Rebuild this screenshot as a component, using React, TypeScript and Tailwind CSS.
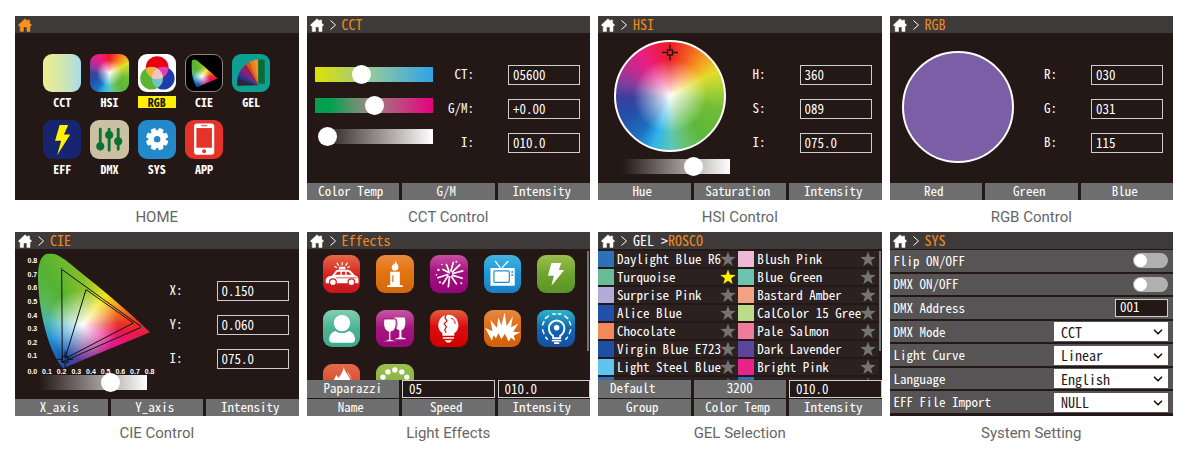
import React from 'react';
import { ChevronDown } from 'lucide-react';

/* ---------- shared pieces ---------- */

function HomeIcon({ className }: { className: string }) {
  return (
    <svg viewBox="0 0 14 14" className={`h-3.5 w-3.5 shrink-0 ${className}`} aria-hidden="true">
      <path
        d="M7 .8 L9.6 3.2 V2 H11.6 V5.1 L13.6 7.1 L12.9 7.9 H12 V13.4 H8.9 V8.9 H5.5 V13.4 H2.2 V7.9 H1.1 L.4 7.1 Z"
        fill="currentColor"
        stroke="currentColor"
        strokeWidth=".5"
        strokeLinejoin="round"
      />
    </svg>
  );
}

function Screen({
  caption,
  trail,
  children,
}: {
  caption: string;
  trail?: React.ReactNode;
  children: React.ReactNode;
}) {
  return (
    <figure className="flex min-w-0 flex-col">
      <div className="flex aspect-[567/368] min-h-0 flex-col bg-[#231815] font-['Noto_Sans_Mono_CJK_SC','Noto_Sans_CJK_SC',monospace] text-[13px] leading-4 text-white [font-feature-settings:'hwid']">
        <header className="flex h-[17px] shrink-0 items-center bg-[#3e3a39] pl-[3px] text-[14px]">
          <a href="#home" aria-label="Home" className="flex">
            <HomeIcon className={trail ? 'text-white' : 'text-[#f7931e]'} />
          </a>
          {trail && (
            <>
              <svg viewBox="0 0 6 10" className="ml-1.5 h-2.5 w-1.5" aria-hidden="true">
                <path d="M.5 .5 L5.5 5 L.5 9.5" fill="none" stroke="#fff" strokeWidth="1" />
              </svg>
              <span className="ml-1.5 pb-0.5 whitespace-pre text-[#ee8a1d]">{trail}</span>
            </>
          )}
        </header>
        {children}
      </div>
      <figcaption className="flex h-8 items-center justify-center pt-0.5 font-[Roboto,sans-serif] text-[15px] text-[#666]">
        {caption}
      </figcaption>
    </figure>
  );
}

function Tabs({ items }: { items: string[] }) {
  return (
    <nav className="grid shrink-0 grid-cols-3 gap-[3px]">
      {items.map((t) => (
        <button key={t} type="button" className="flex h-[17px] items-center justify-center bg-[#6f6e6e] pr-1 pb-0.5">
          {t}
        </button>
      ))}
    </nav>
  );
}

function Fields({ id, rows }: { id: string; rows: [string, string][] }) {
  return (
    <div className="ml-auto flex flex-col gap-3.5 pt-8 pr-2.5">
      {rows.map(([label, value]) => (
        <div key={label} className="flex items-center justify-end gap-[34px]">
          <label htmlFor={`${id}-${label}`} className="pb-0.5">
            {label}:
          </label>
          <input
            id={`${id}-${label}`}
            defaultValue={value}
            className="h-5 w-[72px] border border-[#d0cecd] bg-transparent pb-0.5 pl-1"
          />
        </div>
      ))}
    </div>
  );
}

function Slider({ label, value, className }: { label: string; value: number; className: string }) {
  return (
    <input
      type="range"
      aria-label={label}
      defaultValue={value}
      step="any"
      className={`block h-[19px] appearance-none bg-[length:100%_15px] bg-center bg-no-repeat [&::-webkit-slider-thumb]:h-[19px] [&::-webkit-slider-thumb]:w-[19px] [&::-webkit-slider-thumb]:appearance-none [&::-webkit-slider-thumb]:rounded-full [&::-webkit-slider-thumb]:bg-white ${className}`}
    />
  );
}

const dimmer = 'bg-[linear-gradient(to_right,#231815_4%,#fff)]';

/* ---------- colour drawings ---------- */

const GAMUT = 'M12 0 C4 0 0 8 0 24 C0 50 8 95 25 115 L112 79 C85 53 60 33 40 17 C28 7 20 0 12 0Z';

function Gamut({ id }: { id: string }) {
  return (
    <g>
      <clipPath id={id}>
        <path d={GAMUT} />
      </clipPath>
      <g clipPath={`url(#${id})`}>
        <foreignObject width="112" height="115">
          <div className="h-full w-full bg-[radial-gradient(circle_at_40%_62%,#fff_0%,rgba(255,255,255,.75)_8%,rgba(255,255,255,0)_36%),conic-gradient(from_0deg_at_40%_62%,#86bf2a_0deg,#b5cf20_18deg,#f5e61a_38deg,#f39a1f_62deg,#ea3323_88deg,#e8174a_100deg,#e5178c_120deg,#b02a8c_150deg,#6a3796_180deg,#1d50a8_207deg,#1c8fd8_245deg,#45b6b0_275deg,#5bb85a_300deg,#55b230_325deg,#86bf2a_360deg)]" />
        </foreignObject>
      </g>
    </g>
  );
}

function CieChart() {
  const ys = ['0.8', '0.7', '0.6', '0.5', '0.4', '0.3', '0.2', '0.1'];
  const xs = ['0.0', '0.1', '0.2', '0.3', '0.4', '0.5', '0.6', '0.7', '0.8'];
  return (
    <svg viewBox="0 0 132 124" className="h-[124px] w-[132px] overflow-visible" role="img" aria-label="CIE diagram">
      <g transform="translate(11 4.3)">
        <Gamut id="gamut-chart" />
        <g fill="none" stroke="#111" strokeWidth="1">
          <path d="M23.7 16 L103.7 73.7 L24.3 108.7 Z" />
          <path d="M48 36.3 L95.3 69.7 L27 105.3 Z" />
          <path d="M24 103 h6 v6 h-6 z M19 106 h5 M30 106 h5 M27 98 v5 M27 109 v5" />
        </g>
        <circle cx="23.7" cy="15.6" r="1.2" fill="#2a6a9a" />
        <circle cx="103.7" cy="73.7" r="1.2" fill="#2a6a9a" />
      </g>
      <g fill="#fff" className="font-['Liberation_Sans',sans-serif] text-[7px] font-bold">
        {ys.map((t, i) => (
          <text key={t} x="0.5" y={14.2 + i * 13.6}>
            {t}
          </text>
        ))}
        {xs.map((t, i) => (
          <text key={t} x={5.3 + i * 14.67} y="125.2" textAnchor="middle">
            {t}
          </text>
        ))}
      </g>
    </svg>
  );
}

const hueFill =
  'bg-[radial-gradient(circle,#fff_0%,rgba(255,255,255,.7)_12%,rgba(255,255,255,0)_48%),conic-gradient(#ed1c24_0deg,#f15a24_22deg,#f7931e_40deg,#e3dd2c_62deg,#b0d236_80deg,#6fbd36_105deg,#5cb83a_140deg,#66c06a_160deg,#5fc6b6_178deg,#2fb4ea_198deg,#1c6fc0_218deg,#2350a8_245deg,#3a3f9e_268deg,#7d3f9b_285deg,#c22a8f_305deg,#e81f86_325deg,#ec1c50_345deg,#ed1c24_360deg)]';

/* ---------- home icons ---------- */

function wedge(a: number, b: number, r: number) {
  const p = (d: number) => {
    const t = (d * Math.PI) / 180;
    return `${(26.5 - r * Math.cos(t)).toFixed(2)} ${(31 - r * Math.sin(t)).toFixed(2)}`;
  };
  return `M26.5 31 L${p(a)} L${p(b)} Z`;
}

const fan = ['#3d1f1c', '#25235c', '#2b2f86', '#5b2a86', '#86217f', '#9c1c4c', '#d9531e', '#ee7d1a', '#f6921e'];

type Tile = { name: string; box: string; art: React.ReactNode };

const homeTiles: Tile[] = [
  { name: 'CCT', box: 'bg-[linear-gradient(to_right,#efee8c,#cfe6b4_55%,#a8dcea)]', art: null },
  { name: 'HSI', box: hueFill, art: null },
  {
    name: 'RGB',
    box: 'bg-white',
    art: (
      <g className="isolate">
        <circle cx="19" cy="13.5" r="11.3" fill="#e60012" />
        <circle cx="13.5" cy="24" r="11.3" fill="#5cb531" className="mix-blend-screen" />
        <circle cx="25" cy="24" r="11.3" fill="#1f3cae" className="mix-blend-screen" />
      </g>
    ),
  },
  {
    name: 'CIE',
    box: 'bg-black border border-[#8a8482]',
    art: (
      <g transform="translate(5.5 4.5) scale(.245 .255)">
        <Gamut id="gamut-tile" />
      </g>
    ),
  },
  {
    name: 'GEL',
    box: 'bg-[#0f9e92]',
    art: (
      <g>
        {fan.map((c, i) => (
          <path key={c} d={wedge(i * 10 - 1, i * 10 + 10, 21.5 + i * 0.5)} fill={c} />
        ))}
        <rect x="26" y="5.5" width="6.5" height="24" fill="#0b6b3a" />
      </g>
    ),
  },
  {
    name: 'EFF',
    box: 'bg-[#17256f]',
    art: <path d="M16.5 5 H25 L20.8 14.3 H27 L14 35 L18 20.5 H12 Z" fill="#fff200" />,
  },
  {
    name: 'DMX',
    box: 'bg-[#cbc0a2]',
    art: (
      <g fill="#0c7137">
        <path d="M10.2 9 V29 M19 9 V30 M28 9 V29" stroke="#0c7137" strokeWidth="2.8" strokeLinecap="round" />
        <circle cx="10.2" cy="26" r="4" />
        <circle cx="19" cy="15" r="4" />
        <circle cx="28" cy="21" r="4" />
      </g>
    ),
  },
  {
    name: 'SYS',
    box: 'bg-[#2489ca]',
    art: (
      <g>
        <circle cx="19" cy="19" r="8.8" fill="#fff" />
        {[22.5, 67.5, 112.5, 157.5, 202.5, 247.5, 292.5, 337.5].map((a) => (
          <rect key={a} x="16.4" y="7.9" width="5.2" height="5" rx="1.2" fill="#fff" transform={`rotate(${a} 19 19)`} />
        ))}
        <circle cx="19" cy="19" r="3.2" fill="#2489ca" />
      </g>
    ),
  },
  {
    name: 'APP',
    box: 'bg-[#e63329]',
    art: (
      <g>
        <rect x="9" y="3.5" width="20" height="31" rx="3" fill="#fff" />
        <rect x="11.3" y="8" width="15.4" height="19.5" fill="#e63329" />
        <circle cx="19" cy="31" r="1.9" fill="#e63329" />
        <rect x="16" y="5.2" width="6" height="1" fill="#e63329" />
      </g>
    ),
  },
];

/* ---------- effect icons ---------- */

const w = { fill: '#fff' };
const line = { fill: 'none', stroke: '#fff', strokeLinecap: 'round' as const, strokeLinejoin: 'round' as const };

const effects: Tile[] = [
  {
    name: 'Cop car',
    box: 'bg-[linear-gradient(#e4694a,#d7261f_50%,#c9151b)]',
    art: (
      <g>
        <path d="M16 11.8 h6.5 v2.6 h-6.5z M3 28.5 C1.8 24 3.5 21.5 9 20.8 L13 16 C13.6 15.2 14.5 14.8 15.5 14.8 H24 C26 14.8 27.5 15.4 28.6 16.6 L32 20.5 C35.5 21.5 36.4 24 35.6 28.5 Z" {...w} />
        <path d="M12 20 L14.6 16.8 H17.6 V20 Z M19 16.8 H22.4 V20 H19 Z M23.8 16.8 H25.5 L29 20 H23.8 Z M13 22.6 H34 V23.4 H13Z" fill="#d7261f" />
        <g stroke="#d2201e" strokeWidth="1.2" {...w}>
          <circle cx="10" cy="27.5" r="3.4" />
          <circle cx="28.6" cy="27.5" r="3.4" />
        </g>
        <path d="M19.3 10 V7.6 M15.6 10.4 L14.2 8.2 M23 10.4 L24.4 8.2 M13.6 12.6 L11.8 11.6 M25 12.6 L26.8 11.6" strokeWidth="1.2" {...line} />
      </g>
    ),
  },
  {
    name: 'Candle',
    box: 'bg-[linear-gradient(#e88a3e,#e3740f_45%,#d2670c)]',
    art: (
      <g>
        <path d="M19.3 4.5 C20 8 23 9.5 22.6 12.8 C22.3 15 20.5 15.8 19 15.8 C17 15.8 15.7 14.4 15.8 12.6 C15.9 10.6 17.5 9.8 17.6 8 C18.3 8.6 18.8 9.4 18.8 10 C19.6 8.6 19.5 6.5 19.3 4.5Z M14.3 17 H24 V30.6 H27 V32.3 H11.3 V30.6 H14.3Z" {...w} />
        <path d="M17 20.5 V27.5" stroke="#dd7010" strokeWidth="1.2" />
      </g>
    ),
  },
  {
    name: 'Fireworks',
    box: 'bg-[linear-gradient(#c94fa4,#a3107f_45%,#95057b)]',
    art: (
      <g>
        <path d="M19.5 18 L13 14.5 M19 16 L16.5 9.5 M21 16 L23.5 7.5 M22.5 17 L30 10 M23 18.7 L33 16 M23 20.5 L32.5 23.5 M21.5 21.5 L26.5 29 M19.6 22 L18.5 32 M18.2 21 L13 29 M17.8 19.6 L8 23" strokeWidth="1.7" {...line} />
        <g {...w}>
          <circle cx="8.5" cy="15" r="1.2" />
          <circle cx="10" cy="27.5" r="1.1" />
          <circle cx="26.5" cy="6.8" r=".9" />
          <circle cx="31.5" cy="28.5" r="1.1" />
          <circle cx="12" cy="9.5" r=".8" />
          <circle cx="6.5" cy="20" r=".8" />
        </g>
      </g>
    ),
  },
  {
    name: 'TV screen',
    box: 'bg-[linear-gradient(#45b1e0,#1f9ad9_45%,#1b7ec4)]',
    art: (
      <g>
        <path d="M11.5 6.5 L16 12.5 M24 6.5 L18.5 12.5" strokeWidth="1.3" {...line} />
        <path d="M6.5 13 H31 V31 H6.5Z" {...w} />
        <rect x="10" y="16" width="15.5" height="11.5" rx="1" fill="none" stroke="#1f8fd0" strokeWidth="1.2" />
        <path d="M27.5 16.5 H29.5 V18 H27.5Z M27.5 19.5 H29.5 V21 H27.5Z" fill="#1f8fd0" />
      </g>
    ),
  },
  {
    name: 'Lightning',
    box: 'bg-[linear-gradient(#9dbd50,#6fa52c_50%,#5a9328)]',
    art: <path d="M14.5 8 H24.5 L22 15 H27.5 L14.5 31 L17 21 H11 Z" {...w} />,
  },
  {
    name: 'Club',
    box: 'bg-[linear-gradient(#83cdb4,#4bb494_50%,#3ca88b)]',
    art: (
      <path d="M19.2 5 A8.2 8.2 0 1 1 19.1 5Z M12.5 21.2 C16.5 24.2 22 24.2 26 21.2 C30.5 22.5 32.3 26 32.3 29.5 C32.3 32 31 33 28.5 33 H10 C7.4 33 6.2 32 6.2 29.5 C6.2 26 8.5 22.5 12.5 21.2Z" {...w} />
    ),
  },
  {
    name: 'Party',
    box: 'bg-[linear-gradient(#c656a3,#a5147f_50%,#9a0a7c)]',
    art: (
      <g>
        <path d="M18.5 7.5 H29 C30.5 15 29 19.5 25.6 20.5 V27.5 L30 28.6 V29.5 H18.5 L23.6 27.4 V20.5 C20 19.5 17.5 15 18.5 7.5Z" {...w} />
        <path d="M8 9 H20 C21.3 17 19 21 15 22 V29.8 L19.7 31 V32 H8 V31 L12.8 29.8 V22 C9 21 6.7 17 8 9Z" stroke="#a5147f" strokeWidth="1" {...w} />
        <path d="M20.5 9.5 C21.5 13 21.3 16 20.5 18" fill="none" stroke="#a5147f" strokeWidth=".8" />
      </g>
    ),
  },
  {
    name: 'Faulty bulb',
    box: 'bg-[linear-gradient(#e2603c,#dc0d0f_45%,#cf0000)]',
    art: (
      <g>
        <path d="M18.5 4.8 A10.4 10.4 0 0 1 24.5 23.5 V26 H12.5 V23.5 A10.4 10.4 0 0 1 18.5 4.8Z M12.8 27.4 H24.2 V29 H12.8Z M14.4 30.4 H22.6 L20 32.8 H17Z" {...w} />
        <path d="M16.4 4.5 L15 8 L17.2 11 L14.2 14 L16.6 17 L14.8 20 L16.2 23" fill="none" stroke="#db1511" strokeWidth="1.2" />
        <path d="M21 8.3 C24 9.2 25.5 11.4 25.4 14" fill="none" stroke="#db1511" strokeWidth="1" />
      </g>
    ),
  },
  {
    name: 'Explosion',
    box: 'bg-[linear-gradient(#e68a45,#dd6a12_50%,#d2600a)]',
    art: (
      <path d="M8 31 L1 18 L8.5 21.5 L6.5 10 L13 18 L14.5 7.5 L17.5 15.5 L20.8 2.5 L22.8 16 L29 6.5 L27.3 17.5 L34.5 13.5 L29.5 22 L36.5 22.5 L30 26 L31.5 31 L27 28 L25 32 L21 24 L17.5 29.5 L14.5 23.5 L12 28.5 L9.5 25.5 Z" {...w} />
    ),
  },
  {
    name: 'Pulsing',
    box: 'bg-[linear-gradient(#2fb4c8,#1166b0_50%,#1450a0)]',
    art: (
      <g>
        <path d="M16.2 28.5 V26 C13.4 24.2 12 21.6 12 18.4 A7.8 7.8 0 0 1 27.6 18.4 C27.6 21.6 26.2 24.2 23.4 26 V28.5 Z" strokeWidth="1.9" {...line} />
        <path d="M15.6 31 H24 M17.8 33.4 H21.8" strokeWidth="1.6" {...line} />
        <circle cx="19.8" cy="17.8" r="2.8" {...w} />
        <path d="M8.5 8.5 L11.5 6 M5.6 15 L7 11.6 M5.6 20 L7 23.8 M8.8 27.5 L10.4 29.5 M28 6 L31 8.5 M32.6 11.6 L34 15 M34 20 L32.6 23.8 M30.8 27.5 L29 29.5 M16 4 H18.5 M21.5 4 H24" strokeWidth="1.5" {...line} />
      </g>
    ),
  },
  {
    name: 'Fire',
    box: 'bg-[linear-gradient(#e4694a,#c9351b)]',
    art: <path d="M21 3 C22 9 28 12 29 22 C29 31 24 34 19 34 C13 34 8 30 10 20 C11 15 12.5 13 13.5 11 C14.5 12 15 13 15.3 14 C18 11 20 8 21 3Z M24 7 C26 9 28 12 29 16 Z" {...w} />,
  },
  {
    name: 'Color chase',
    box: 'bg-[linear-gradient(#9dc050,#6fa52c)]',
    art: (
      <g {...w}>
        <circle cx="19" cy="6" r="2.7" />
        <circle cx="12" cy="8" r="2.7" />
        <circle cx="26" cy="8" r="2.7" />
        <circle cx="7" cy="13.2" r="2.7" />
        <circle cx="31" cy="13.2" r="2.7" />
        <circle cx="6" cy="20" r="2.7" />
        <circle cx="32" cy="20" r="2.7" />
      </g>
    ),
  },
];

function TileArt({ tile }: { tile: Tile }) {
  return (
    <span className={`block aspect-square w-full overflow-hidden rounded-[9px] ${tile.box}`}>
      {tile.art && (
        <svg viewBox="0 0 38 38" className="h-full w-full" aria-hidden="true">
          {tile.art}
        </svg>
      )}
    </span>
  );
}

/* ---------- gel list ---------- */

type Gel = { name: string; chip: string; fav?: boolean };

const gels: Gel[] = [
  { name: 'Daylight Blue R6', chip: 'bg-[#2d72b8]' },
  { name: 'Blush Pink', chip: 'bg-[#efb8d6]' },
  { name: 'Turquoise', chip: 'bg-[#68bd96]', fav: true },
  { name: 'Blue Green', chip: 'bg-[#6cc4b0]' },
  { name: 'Surprise Pink', chip: 'bg-[#b4acd8]' },
  { name: 'Bastard Amber', chip: 'bg-[#f5a183]' },
  { name: 'Alice Blue', chip: 'bg-[#2350a6]' },
  { name: 'CalColor 15 Gree', chip: 'bg-[#bbdc8b]' },
  { name: 'Chocolate', chip: 'bg-[#f08a5d]' },
  { name: 'Pale Salmon', chip: 'bg-[#f07c9b]' },
  { name: 'Virgin Blue E723', chip: 'bg-[#1f4fa4]' },
  { name: 'Dark Lavender', chip: 'bg-[#5b469b]' },
  { name: 'Light Steel Blue', chip: 'bg-[#5fc4ee]' },
  { name: 'Bright Pink', chip: 'bg-[#e8248c]' },
  { name: '', chip: 'bg-[#2d72b8]' },
  { name: '', chip: 'bg-[#2d72b8]' },
];

function Star({ on }: { on?: boolean }) {
  return (
    <svg viewBox="0 0 16 16" className={`h-4 w-4 shrink-0 ${on ? 'text-[#fff200]' : 'text-[#757373]'}`} aria-hidden="true">
      <path d="M8 .4 L9.9 5.8 L15.7 6 L11.1 9.5 L12.7 15.1 L8 11.8 L3.3 15.1 L4.9 9.5 L.3 6 L6.1 5.8 Z" fill="currentColor" />
    </svg>
  );
}

/* ---------- settings ---------- */

function Row({ id, label, children }: { id: string; label: string; children: React.ReactNode }) {
  return (
    <div className="flex min-h-0 flex-1 items-center justify-between border-b-2 border-[#231815] bg-[#575455] pr-[5px] pl-1">
      <label htmlFor={id}>{label}</label>
      {children}
    </div>
  );
}

function Toggle({ id }: { id: string }) {
  return (
    <input
      id={id}
      type="checkbox"
      role="switch"
      className="flex h-[15px] w-[35px] appearance-none items-center rounded-full bg-[#b1b0b0] p-px before:block before:h-[13px] before:w-[13px] before:rounded-full before:bg-white checked:before:translate-x-5"
    />
  );
}

function Picker({ id, value }: { id: string; value: string }) {
  return (
    <span className="relative block w-[114px]">
      <select id={id} className="block h-[19px] w-full appearance-none bg-white pl-[7px] text-[14px] leading-[18px] text-[#231815]">
        <option>{value}</option>
      </select>
      <ChevronDown className="pointer-events-none absolute top-[3px] right-[3px] h-3.5 w-3.5 text-[#231815]" strokeWidth={3} />
    </span>
  );
}

const readout = 'h-[18px] w-full min-w-0 border border-[#d0cfcf] bg-transparent pb-0.5 pl-1.5';
const cell = 'flex h-[18px] items-center bg-[#6f6e6e] pb-0.5';

export default function App() {
  return (
    <main className="min-h-screen bg-white pt-4 pr-[18px] pl-[15px]">
      <div className="grid grid-cols-1 gap-x-2 sm:grid-cols-2 lg:grid-cols-4">
        <Screen caption="HOME">
          <div className="grid grid-cols-5 gap-x-[9px] gap-y-3 px-7 pt-[21px]">
            {homeTiles.map((t) => (
              <button key={t.name} type="button" className="flex flex-col items-center gap-1">
                <TileArt tile={t} />
                <span
                  className={`block w-full text-center text-[12px] leading-3 font-bold ${
                    t.name === 'RGB' ? 'bg-[#fff100] text-[#231815]' : ''
                  }`}
                >
                  {t.name}
                </span>
              </button>
            ))}
          </div>
        </Screen>

        <Screen caption="CCT Control" trail="CCT">
          <div className="flex min-h-0 flex-1">
            <div className="flex flex-col gap-3 pt-8 pl-2">
              <Slider label="Color Temp" value={38} className="w-[118px] bg-[linear-gradient(to_right,#dfe000,#8fc7a0_50%,#2fa3e6)]" />
              <Slider label="G/M" value={51.5} className="w-[118px] bg-[linear-gradient(to_right,#00a04e_12%,#9a8a80_45%,#e6007e)]" />
              <Slider label="Intensity" value={4} className={`w-[118px] ${dimmer}`} />
            </div>
            <Fields id="cct" rows={[['CT', '05600'], ['G/M', '+0.00'], ['I', '010.0']]} />
          </div>
          <Tabs items={['Color Temp', 'G/M', 'Intensity']} />
        </Screen>

        <Screen caption="HSI Control" trail="HSI">
          <div className="flex min-h-0 flex-1">
            <div className="flex flex-col items-start gap-[5px] pt-[7px] pl-4">
              <div className={`h-28 w-28 rounded-full border-2 border-white ${hueFill}`}>
                <svg viewBox="0 0 108 108" className="h-full w-full" aria-hidden="true">
                  <path d="M51.5 8 h5 v5 h-5z M46 10.5 h5.5 M56.5 10.5 h5.5 M54 2.5 v5.5 M54 13 v5.5" fill="none" stroke="#231815" strokeWidth="1.3" />
                </svg>
              </div>
              <Slider label="Intensity" value={71.5} className={`ml-1 w-28 ${dimmer}`} />
            </div>
            <Fields id="hsi" rows={[['H', '360'], ['S', '089'], ['I', '075.0']]} />
          </div>
          <Tabs items={['Hue', 'Saturation', 'Intensity']} />
        </Screen>

        <Screen caption="RGB Control" trail="RGB">
          <div className="flex min-h-0 flex-1">
            <div className="pt-[18px] pl-3">
              <div className="h-28 w-28 rounded-full border-2 border-white bg-[#7b5ea6]" />
            </div>
            <Fields id="rgb" rows={[['R', '030'], ['G', '031'], ['B', '115']]} />
          </div>
          <Tabs items={['Red', 'Green', 'Blue']} />
        </Screen>

        <Screen caption="CIE Control" trail="CIE">
          <div className="flex min-h-0 flex-1">
            <div className="pl-3">
              <CieChart />
              <Slider label="Intensity" value={71} className={`ml-2 w-28 ${dimmer}`} />
            </div>
            <Fields id="cie" rows={[['X', '0.150'], ['Y', '0.060'], ['I', '075.0']]} />
          </div>
          <Tabs items={['X_axis', 'Y_axis', 'Intensity']} />
        </Screen>

        <Screen caption="Light Effects" trail="Effects">
          <div className="flex min-h-0 flex-1 items-start overflow-hidden">
            <div className="grid flex-1 grid-cols-5 gap-x-4 gap-y-[17px] pt-1.5 pr-3 pl-4">
              {effects.map((t) => (
                <button key={t.name} type="button" aria-label={t.name}>
                  <TileArt tile={t} />
                </button>
              ))}
            </div>
            <div className="mt-0.5 mr-px h-[100px] w-0.5 bg-[#757373]" />
          </div>
          <div className="mb-px grid shrink-0 grid-cols-3 gap-[3px]">
            <div className={`${cell} justify-center`}>Paparazzi</div>
            <input aria-label="Speed" defaultValue="05" className={readout} />
            <input aria-label="Intensity" defaultValue="010.0" className={readout} />
          </div>
          <Tabs items={['Name', 'Speed', 'Intensity']} />
        </Screen>

        <Screen
          caption="GEL Selection"
          trail={
            <>
              <span className="text-white">GEL &gt;</span>ROSCO
            </>
          }
        >
          <div className="flex min-h-0 flex-1 items-start overflow-hidden">
            <ul className="grid flex-1 grid-cols-2 gap-y-0.5 pt-0.5">
              {gels.map((g, i) => (
                <li key={i} className="flex h-4 min-w-0 items-center bg-[#2b2120]">
                  <span className={`h-4 w-4 shrink-0 ${g.chip}`} />
                  <span className="w-[106px] shrink-0 pl-[3px] whitespace-nowrap">{g.name}</span>
                  <Star on={g.fav} />
                </li>
              ))}
            </ul>
            <div className="mt-0.5 mr-px h-[100px] w-0.5 bg-[#757373]" />
          </div>
          <div className="mb-px grid shrink-0 grid-cols-3 gap-[3px]">
            <div className={`${cell} pl-3`}>Default</div>
            <div className={`${cell} justify-center`}>3200</div>
            <input aria-label="Gel intensity" defaultValue="010.0" className={readout} />
          </div>
          <Tabs items={['Group', 'Color Temp', 'Intensity']} />
        </Screen>

        <Screen caption="System Setting" trail="SYS">
          <div className="flex min-h-0 flex-1 flex-col py-px">
            <Row id="flip" label="Flip ON/OFF">
              <Toggle id="flip" />
            </Row>
            <Row id="dmx" label="DMX ON/OFF">
              <Toggle id="dmx" />
            </Row>
            <Row id="address" label="DMX Address">
              <input id="address" defaultValue="001" className="h-[18px] w-[53px] border border-[#d0cfcf] bg-[#231815] pb-0.5 pl-1" />
            </Row>
            <Row id="mode" label="DMX Mode">
              <Picker id="mode" value="CCT" />
            </Row>
            <Row id="curve" label="Light Curve">
              <Picker id="curve" value="Linear" />
            </Row>
            <Row id="language" label="Language">
              <Picker id="language" value="English" />
            </Row>
            <Row id="import" label="EFF File Import">
              <Picker id="import" value="NULL" />
            </Row>
          </div>
        </Screen>
      </div>
    </main>
  );
}
